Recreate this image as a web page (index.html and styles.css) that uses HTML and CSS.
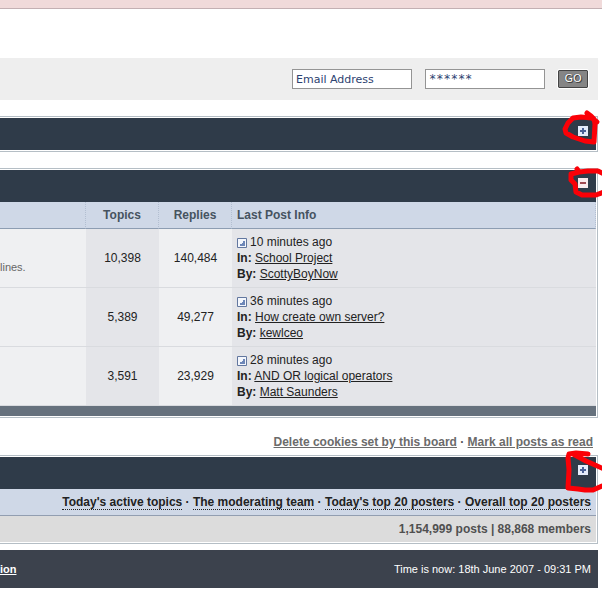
FILE: index.html
```html
<!DOCTYPE html>
<html lang="en">
<head>
<meta charset="utf-8">
<title>Forum index</title>
<link rel="stylesheet" href="styles.css">
</head>
<body>
<div class="topbar"></div>
<main class="page">
  <form class="login">
    <input class="field" type="text" aria-label="Email address" value="Email Address">
    <input class="field field-secret" type="text" aria-label="Password" value="******">
    <button class="go" type="button">GO</button>
  </form>

  <section class="panel">
    <div class="panel-title">
      <button class="toggle" type="button" aria-label="Expand"><svg width="10" height="10" viewBox="0 0 10 10"><rect width="10" height="10" fill="#e4ebfa"/><path d="M5 2v6M2 5h6" stroke="#4a6196" stroke-width="2"/></svg></button>
      <svg class="mark" width="44" height="50" viewBox="0 0 44 50"><path d="M29 5l4 3 3 3 1 5-1 18-9-1-12-4-7-4-1-4 3-6 5-5 8-1 11 1 5 4"/></svg>
    </div>
  </section>

  <section class="panel">
    <div class="panel-title">
      <button class="toggle" type="button" aria-label="Collapse"><svg width="10" height="10" viewBox="0 0 10 10"><rect width="10" height="10" fill="#faeaec"/><path d="M2 5h6" stroke="#a04850" stroke-width="2"/></svg></button>
      <svg class="mark" width="44" height="50" viewBox="0 0 44 50"><path d="M19 9l2 3-8 2v6l4 4 1 8 6 3h14l8-3M21 12l9-1h10l6 3"/></svg>
    </div>
    <table class="forums">
      <thead>
        <tr><th class="forum"></th><th class="count">Topics</th><th class="count">Replies</th><th class="last">Last Post Info</th></tr>
      </thead>
      <tbody>
        <tr>
          <td class="forum">lines.</td><td class="count shade">10,398</td><td class="count">140,484</td>
          <td class="last shade"><svg class="post" width="10" height="10" viewBox="0 0 10 10"><path d="M.5.5h9v9h-9z" fill="#f3f6fc" stroke="#62779f"/><path d="M8 3v5H3V6h2V5h1V3z" fill="#6d87b8"/></svg>10 minutes ago<br><b>In:</b> <a href="#">School Project</a><br><b>By:</b> <a href="#">ScottyBoyNow</a></td>
        </tr>
        <tr>
          <td class="forum"></td><td class="count shade">5,389</td><td class="count">49,277</td>
          <td class="last shade"><svg class="post" width="10" height="10" viewBox="0 0 10 10"><path d="M.5.5h9v9h-9z" fill="#f3f6fc" stroke="#62779f"/><path d="M8 3v5H3V6h2V5h1V3z" fill="#6d87b8"/></svg>36 minutes ago<br><b>In:</b> <a href="#">How create own server?</a><br><b>By:</b> <a href="#">kewlceo</a></td>
        </tr>
        <tr>
          <td class="forum"></td><td class="count shade">3,591</td><td class="count">23,929</td>
          <td class="last shade"><svg class="post" width="10" height="10" viewBox="0 0 10 10"><path d="M.5.5h9v9h-9z" fill="#f3f6fc" stroke="#62779f"/><path d="M8 3v5H3V6h2V5h1V3z" fill="#6d87b8"/></svg>28 minutes ago<br><b>In:</b> <a href="#">AND OR logical operators</a><br><b>By:</b> <a href="#">Matt Saunders</a></td>
        </tr>
      </tbody>
    </table>
    <div class="panel-foot"></div>
  </section>

  <nav class="board-links"><a href="#">Delete cookies set by this board</a> · <a href="#">Mark all posts as read</a></nav>

  <section class="panel stats">
    <div class="panel-title">
      <button class="toggle" type="button" aria-label="Expand"><svg width="10" height="10" viewBox="0 0 10 10"><rect width="10" height="10" fill="#e4ebfa"/><path d="M5 2v6M2 5h6" stroke="#4a6196" stroke-width="2"/></svg></button>
      <svg class="mark" width="44" height="50" viewBox="0 0 44 50"><path d="M30 7l-12-1-7 1-1 4 1 12-1 18 10 1 7 1h8l9-4M15 7l13 7 9 4 9 4"/></svg>
    </div>
    <div class="stat-links"><a href="#">Today's active topics</a> · <a href="#">The moderating team</a> · <a href="#">Today's top 20 posters</a> · <a href="#">Overall top 20 posters</a></div>
    <div class="totals"><b>1,154,999</b> posts | <b>88,868</b> members</div>
  </section>

  <footer class="footer"><a href="#">ion</a><span>Time is now: 18th June 2007 - 09:31 PM</span></footer>
</main>
</body>
</html>
```
FILE: styles.css
```css
* { box-sizing: border-box; }
body {
  margin: 0;
  background: #fff;
  color: #222;
  font: 12px/16px "Liberation Sans", Arial, sans-serif;
  overflow-x: hidden;
}
.topbar { height: 9px; background: #f0dada; border-bottom: 1px solid #c3b0b3; }
.page { margin: 49px 4px 0 0; }

.login {
  display: flex;
  justify-content: flex-end;
  align-items: center;
  gap: 13px;
  height: 42px;
  padding: 0 10px;
  background: #eee;
}
.field {
  width: 120px;
  height: 20px;
  padding: 0 3px;
  border: 1px solid #949494;
  background: #fff;
  color: #2d4270;
  font: 11px "DejaVu Sans", Verdana, sans-serif;
}
.field-secret { font: 12px "DejaVu Sans Mono", monospace; }
.go {
  width: 30px;
  height: 18px;
  padding: 0;
  border: 1px solid #444;
  border-radius: 1px;
  outline: 1px solid #fff;
  background: #858585;
  color: #fff;
  font: 11px/16px "DejaVu Sans", Verdana, sans-serif;
  text-shadow: 0 0 1px #222, 1px 1px 0 #444;
}

.panel {
  margin-top: 16px;
  padding: 1px 1px 1px 0;
  border: 1px solid #b5bec5;
  border-left: 0;
}
.panel-title {
  position: relative;
  display: flex;
  justify-content: flex-end;
  height: 32px;
  padding: 8px;
  background: #2f3b49;
}
.toggle { width: 10px; height: 10px; padding: 0; border: 0; background: none; }
.toggle svg { display: block; }
.mark {
  position: absolute;
  top: -10px;
  right: -6px;
  pointer-events: none;
  z-index: 1;
}
.mark path {
  fill: none;
  stroke: #fb0007;
  stroke-width: 5;
  stroke-linecap: round;
  stroke-linejoin: round;
}

.forums { width: 100%; border-collapse: separate; border-spacing: 0; table-layout: fixed; }
.forums th {
  height: 27px;
  padding: 0 5px;
  background: #cfd8e7;
  border-bottom: 1px solid #8d9db2;
  border-right: 1px dotted #b3bfd1;
  color: #46535f;
}
.forums td { height: 59px; padding: 5px; background: #eff0f2; border-bottom: 1px solid #d9dbdf; }
.forums td.shade { background: #e4e5e9; }
.forums .forum { width: 86px; padding-left: 0; color: #666; font-size: 11px; vertical-align: middle; }
.forums td.forum { padding-top: 22px; }
.forums .count { width: 73px; text-align: center; }
.forums .last { text-align: left; }
.forums a { color: #222; }
.post { margin-right: 3px; vertical-align: -2px; }
.panel-foot { height: 10px; background: #66717d; }

.board-links {
  padding: 16px 5px 5px;
  color: #555;
  font-weight: bold;
  text-align: right;
}
.board-links a { color: #6b6b6b; }
.stats { margin-top: 0; }
.stat-links, .totals { height: 27px; padding: 5px; text-align: right; font-weight: bold; }
.stat-links { background: #cfd8e7; border-bottom: 1px solid #929eb1; }
.stat-links a { color: #222; text-decoration: none; border-bottom: 1px dotted #222; }
.totals { height: 26px; background: #dcdcdc; color: #505050; }

.footer {
  display: flex;
  justify-content: space-between;
  margin: 6px 0 8px;
  padding: 11px 7px 11px 0;
  background: #3c424d;
  color: #fff;
  font-size: 11px;
}
.footer a { color: #fff; font-weight: bold; }
```
